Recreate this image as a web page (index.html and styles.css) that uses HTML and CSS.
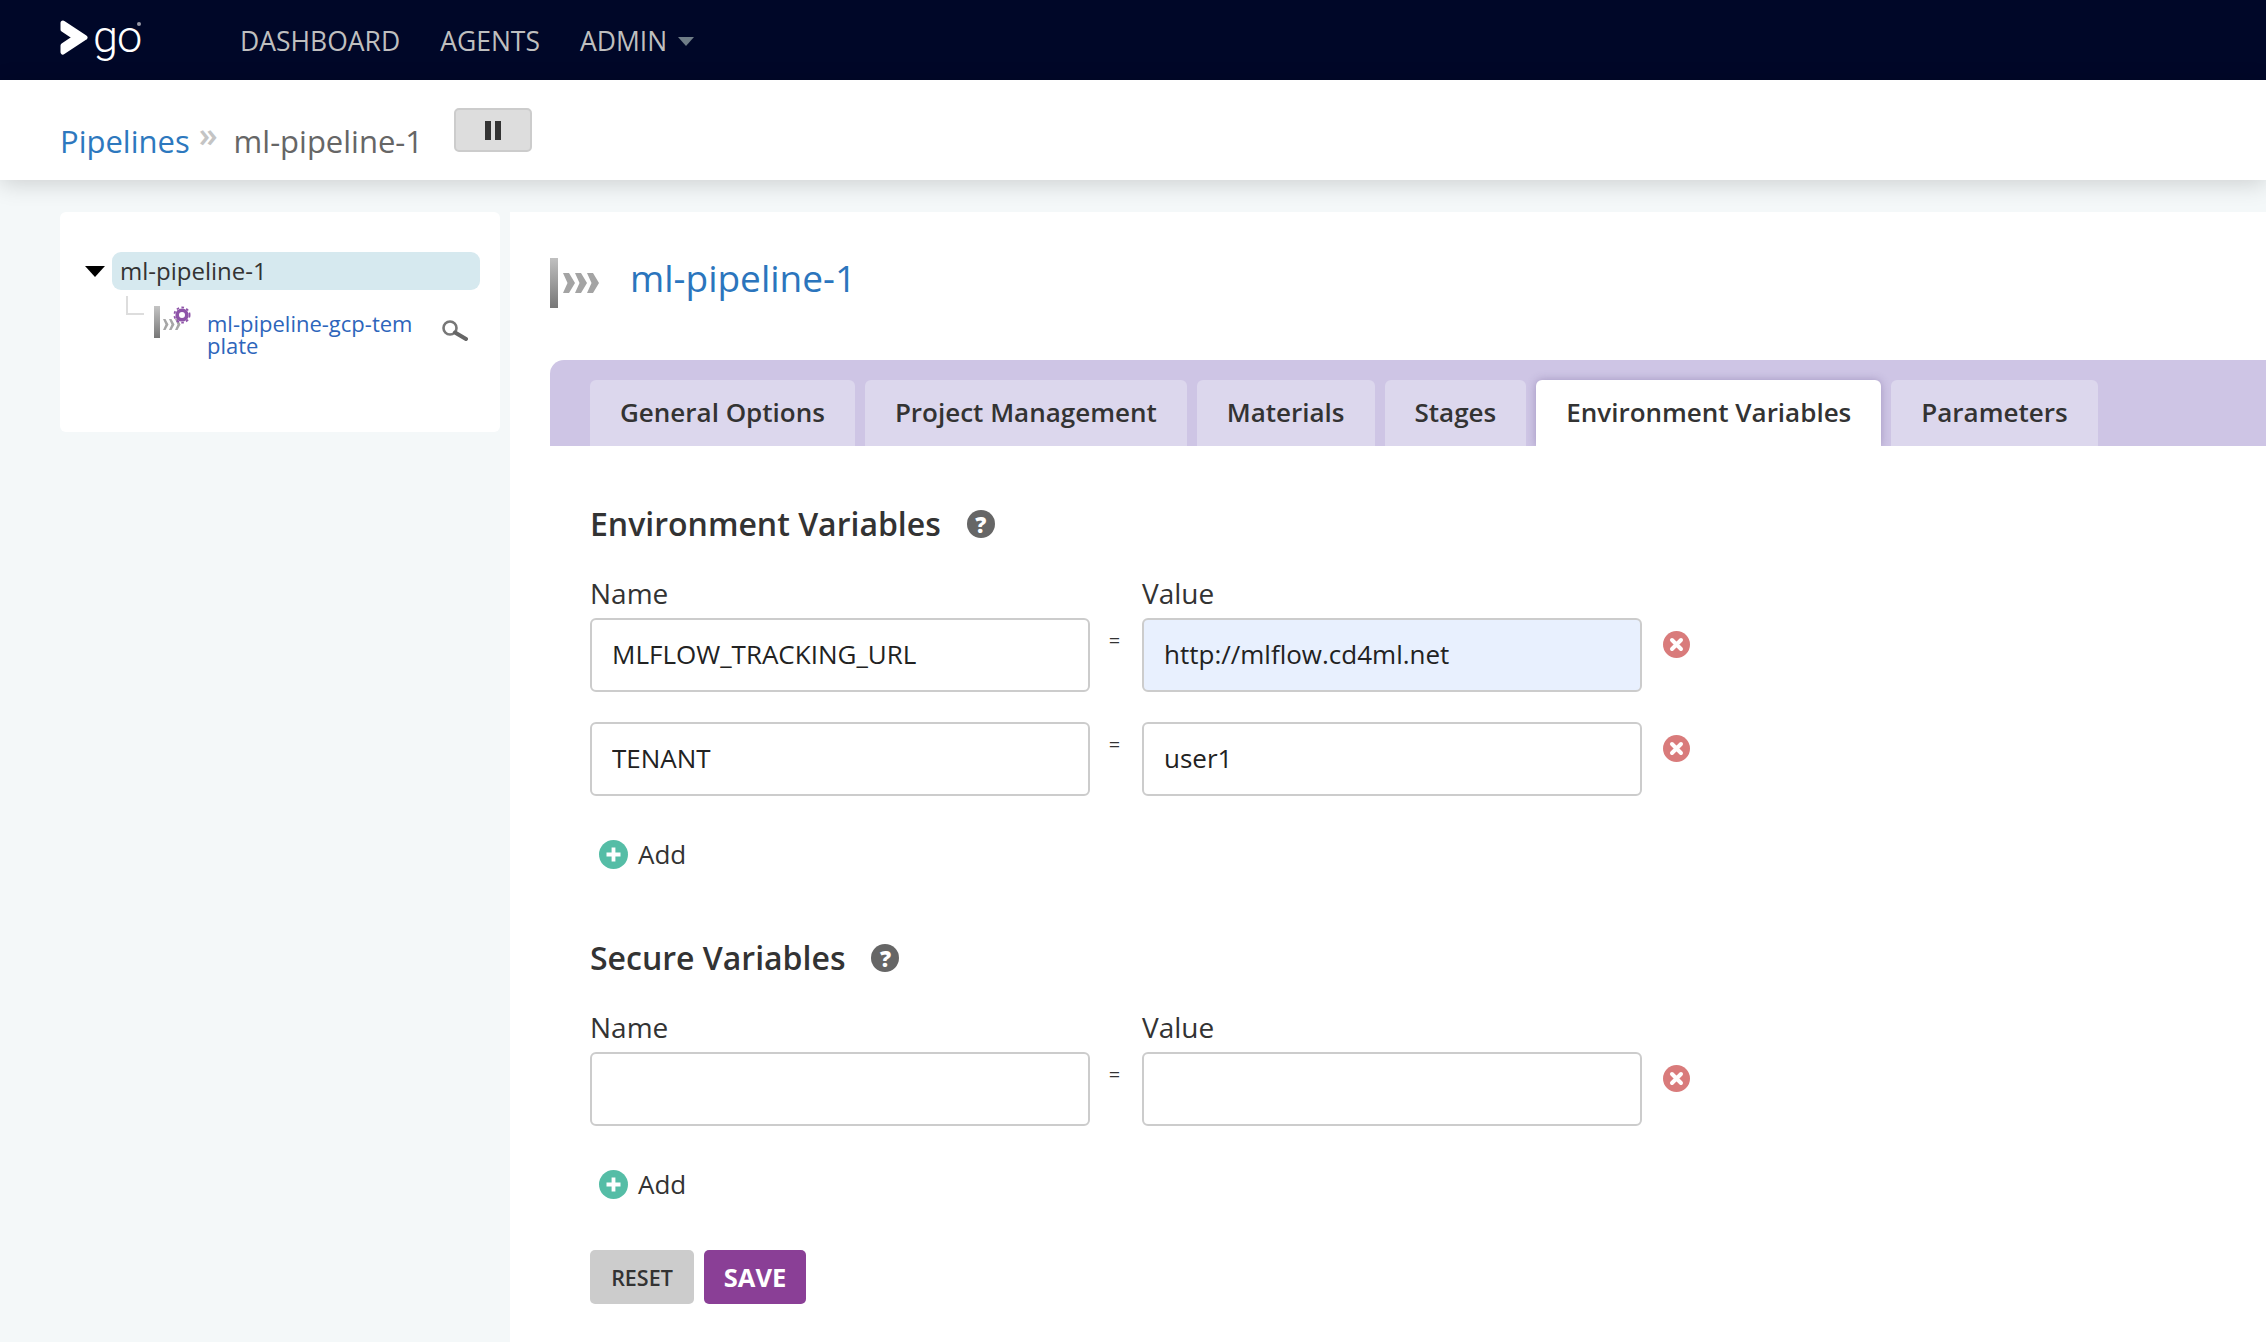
FILE: index.html
```html
<!DOCTYPE html>
<html lang="en">
<head>
<meta charset="utf-8">
<title>ml-pipeline-1</title>
<link rel="stylesheet" href="styles.css">
</head>
<body>
<header class="topbar">
  <a class="logo">
    <svg class="logo-mark" width="28" height="35" viewBox="0 0 28 35"><path d="M3 3 L25 17.500 L3 32 L3 25.500 L15 17.500 L3 9.500 Z" fill="#fff" stroke="#fff" stroke-width="5" stroke-linejoin="round"/></svg>
    <span class="logo-text">go</span>
    <i class="logo-dot"></i>
  </a>
  <nav class="nav">
    <a>DASHBOARD</a>
    <a>AGENTS</a>
    <a class="nav-admin">ADMIN<i class="caret"></i></a>
  </nav>
</header>

<div class="crumbbar">
  <div class="crumbs"><a class="crumb-link">Pipelines</a><span class="crumb-sep">»</span><span class="crumb-current">ml-pipeline-1</span></div>
  <button class="pause"><i></i><i></i></button>
</div>

<div class="page">
  <aside class="sidebar">
    <div class="tree-root">
      <i class="tree-toggle"></i>
      <div class="tree-node">ml-pipeline-1</div>
    </div>
    <div class="tree-child">
      <i class="tree-elbow"></i>
      <svg class="tree-icon" width="37" height="32" viewBox="0 0 37 32">
        <defs><linearGradient id="g1" x1="0" y1="0" x2="0" y2="1"><stop offset="0" stop-color="#c4c4c4"/><stop offset="1" stop-color="#777"/></linearGradient></defs>
        <rect x="0" y="0" width="6" height="32" fill="url(#g1)"/>
        <path d="M9 13h2.500l3 5.500-3 5.500h-2.500l2.500-5.500zM15 13h2.500l3 5.500-3 5.500h-2.500l2.500-5.500zM21 13h2.500l3 5.500-3 5.500h-2.500l2.500-5.500z" fill="#a6a6a6"/>
        <circle cx="28" cy="9" r="4.800" fill="#fff" stroke="#8e54a8" stroke-width="3.600"/>
        <circle cx="28" cy="9" r="7.600" fill="none" stroke="#8e54a8" stroke-width="1.800" stroke-dasharray="2.600 2.400"/>
      </svg>
      <a class="tree-link">ml-pipeline-gcp-template</a>
      <svg class="tree-search" width="27" height="21" viewBox="0 0 27 21"><circle cx="9" cy="8" r="6.500" fill="#fff" stroke="#777" stroke-width="2.600"/><path d="M14 12.500 L25 19" stroke="#666" stroke-width="4" stroke-linecap="round"/></svg>
    </div>
  </aside>

  <main class="main">
    <div class="title-row">
      <svg class="title-icon" width="50" height="50" viewBox="0 0 50 50">
        <defs><linearGradient id="g2" x1="0" y1="0" x2="0" y2="1"><stop offset="0" stop-color="#c0c0c0"/><stop offset="1" stop-color="#777"/></linearGradient></defs>
        <rect x="0" y="0" width="8" height="50" fill="url(#g2)"/>
        <path d="M13 15h6l6 10-6 10h-6l4.500-10zM25 15h6l6 10-6 10h-6l4.500-10zM37 15h6l6 10-6 10h-6l4.500-10z" fill="#a4a4a4"/>
      </svg>
      <h1 class="title">ml-pipeline-1</h1>
    </div>

    <div class="tabs">
      <a class="tab">General Options</a>
      <a class="tab">Project Management</a>
      <a class="tab">Materials</a>
      <a class="tab">Stages</a>
      <a class="tab tab-active">Environment Variables</a>
      <a class="tab">Parameters</a>
    </div>

    <form class="form">
      <h2 class="section-title">Environment Variables<span class="help">?</span></h2>
      <div class="labels"><label>Name</label><label class="label-value">Value</label></div>
      <div class="var-row">
        <input class="field" value="MLFLOW_TRACKING_URL"><span class="eq">=</span><input class="field field-filled" value="http://mlflow.cd4ml.net">
        <svg class="del" width="27" height="27" viewBox="0 0 27 27"><circle cx="13.500" cy="13.500" r="13.500" fill="#d97b7b"/><path d="M9 9l9 9M18 9l-9 9" stroke="#fff" stroke-width="4" stroke-linecap="round"/></svg>
      </div>
      <div class="var-row">
        <input class="field" value="TENANT"><span class="eq">=</span><input class="field" value="user1">
        <svg class="del" width="27" height="27" viewBox="0 0 27 27"><circle cx="13.500" cy="13.500" r="13.500" fill="#d97b7b"/><path d="M9 9l9 9M18 9l-9 9" stroke="#fff" stroke-width="4" stroke-linecap="round"/></svg>
      </div>
      <a class="add">
        <svg width="29" height="29" viewBox="0 0 29 29"><circle cx="14.500" cy="14.500" r="14.500" fill="#55bda6"/><path d="M14.500 7.500v14M7.500 14.500h14" stroke="#fff" stroke-width="3.800"/></svg>
        Add
      </a>

      <h2 class="section-title section-secure">Secure Variables<span class="help">?</span></h2>
      <div class="labels"><label>Name</label><label class="label-value">Value</label></div>
      <div class="var-row">
        <input class="field"><span class="eq">=</span><input class="field">
        <svg class="del" width="27" height="27" viewBox="0 0 27 27"><circle cx="13.500" cy="13.500" r="13.500" fill="#d97b7b"/><path d="M9 9l9 9M18 9l-9 9" stroke="#fff" stroke-width="4" stroke-linecap="round"/></svg>
      </div>
      <a class="add">
        <svg width="29" height="29" viewBox="0 0 29 29"><circle cx="14.500" cy="14.500" r="14.500" fill="#55bda6"/><path d="M14.500 7.500v14M7.500 14.500h14" stroke="#fff" stroke-width="3.800"/></svg>
        Add
      </a>

      <div class="actions">
        <button type="button" class="btn btn-reset">RESET</button>
        <button type="button" class="btn btn-save">SAVE</button>
      </div>
    </form>
  </main>
</div>
</body>
</html>
```
FILE: styles.css
```css
* { box-sizing: border-box; }
html, body { margin: 0; height: 100%; overflow: hidden; }
body {
  font-family: "Open Sans", "Noto Sans", sans-serif;
  background: #f4f8f9;
  color: #333;
  display: flex;
  flex-direction: column;
}

.topbar {
  height: 80px;
  flex: none;
  background: #000728;
  display: flex;
  align-items: center;
  padding-left: 60px;
}
.logo { width: 80px; height: 40px; display: flex; align-items: flex-start; color: #fff; position: relative; }
.logo-mark { flex: none; }
.logo-text {
  font-family: Roboto, sans-serif;
  font-size: 45px;
  font-weight: 300;
  line-height: 34px;
  letter-spacing: -1px;
  margin-left: 5px;
}
.logo-dot {
  position: absolute;
  left: 77px;
  top: 2px;
  width: 4px;
  height: 4px;
  border-radius: 50%;
  background: #9a9aa6;
}
.nav {
  margin-left: 100px;
  padding-top: 2px;
  display: flex;
  gap: 40px;
  font-size: 26.5px;
  line-height: 40px;
  color: #bfbfbf;
}
.nav-admin { display: flex; align-items: center; }
.caret {
  margin-left: 11px;
  width: 0;
  height: 0;
  border-left: 8px solid transparent;
  border-right: 8px solid transparent;
  border-top: 9px solid #6f7d87;
}

.crumbbar {
  height: 100px;
  flex: none;
  background: #fff;
  display: flex;
  align-items: flex-start;
  padding: 28px 0 0 60px;
  box-shadow: 0 4px 22px rgba(0, 0, 0, .16);
  position: relative;
}
.crumbs { margin-top: 13px; font-size: 31px; line-height: 40px; display: flex; white-space: nowrap; }
.crumb-link { color: #2d78be; }
.crumb-sep { color: #c4c4c4; font-size: 34px; font-weight: 600; margin: -7px 16px 0 9px; }
.crumb-current { color: #666; }
.pause {
  margin-left: 31px;
  width: 78px;
  height: 44px;
  background: #ddd;
  border: 2px solid #ccc;
  border-radius: 5px;
  display: flex;
  align-items: center;
  justify-content: center;
  gap: 4px;
  padding: 0;
}
.pause i { width: 6px; height: 19px; background: #333; }

.page {
  flex: 1;
  display: flex;
  align-items: stretch;
  padding: 32px 0 0 60px;
  gap: 10px;
  min-height: 0;
}
.sidebar {
  width: 440px;
  height: 220px;
  flex: none;
  background: #fff;
  border-radius: 6px;
  padding: 40px 20px 0 25px;
}
.tree-root { display: flex; align-items: center; }
.tree-toggle {
  flex: none;
  margin-right: 7px;
  width: 0;
  height: 0;
  border-left: 10px solid transparent;
  border-right: 10px solid transparent;
  border-top: 11px solid #000;
}
.tree-node {
  flex: 1;
  height: 38px;
  line-height: 37px;
  padding-left: 8px;
  font-size: 24px;
  color: #333;
  background: #d6e9ef;
  border-radius: 9px;
}
.tree-child { display: flex; align-items: flex-start; padding-left: 41px; }
.tree-elbow {
  flex: none;
  width: 18px;
  height: 19px;
  margin-top: 6px;
  border-left: 2px solid #ddd;
  border-bottom: 2px solid #ddd;
}
.tree-icon { flex: none; margin: 16px 0 0 10px; }
.tree-link {
  flex: none;
  width: 212px;
  margin: 22px 0 0 16px;
  font-size: 22px;
  line-height: 22px;
  color: #2d65bb;
  word-break: break-all;
}
.tree-search { flex: none; margin: 30px 0 0 22px; }

.main {
  flex: 1;
  min-width: 0;
  background: #fff;
  padding-left: 40px;
}
.title-row { height: 148px; display: flex; align-items: flex-start; }
.title-icon { flex: none; margin-top: 46px; }
.title {
  margin: 41px 0 0 30px;
  font-size: 37px;
  font-weight: 400;
  line-height: 50px;
  color: #2b75bd;
}

.tabs {
  height: 86px;
  background: #cec5e5;
  border-radius: 14px 0 0 0;
  padding: 20px 0 0 40px;
  display: flex;
  gap: 10px;
}
.tab {
  height: 66px;
  padding: 0 30px;
  font-size: 26px;
  font-weight: 600;
  line-height: 64px;
  color: #333;
  background: #dcd7ed;
  border-radius: 6px 6px 0 0;
}
.tab-active {
  background: #fff;
  box-shadow: 0 0 8px rgba(80, 60, 120, .35);
  clip-path: inset(-10px -10px 0 -10px);
}

.form { padding: 58px 0 0 40px; }
.section-title {
  margin: 0 0 31px;
  font-size: 32px;
  font-weight: 600;
  line-height: 40px;
  color: #333;
  display: flex;
  align-items: center;
}
.section-secure { margin-top: 66px; }
.help {
  margin-left: 26px;
  width: 28px;
  height: 28px;
  border-radius: 50%;
  background: #666;
  color: #fff;
  font-size: 22px;
  font-weight: 800;
  line-height: 28px;
  text-align: center;
}
.labels { display: flex; height: 36px; margin-bottom: 7px; font-size: 28px; line-height: 36px; color: #333; }
.labels label { width: 552px; }
.var-row { display: grid; grid-template-columns: 500px 52px 500px 27px; height: 74px; margin-bottom: 30px; }
.var-row:last-of-type { margin-bottom: 0; }
.field {
  width: 500px;
  height: 74px;
  border: 2px solid #ccc;
  border-radius: 6px;
  padding: 0 20px 2px;
  font: 400 26px "Open Sans", sans-serif;
  color: #222;
  background: #fff;
}
.field-filled { background: #e8f0fe; }
.eq { font-size: 20px; line-height: 46px; text-align: center; color: #333; margin-left: -3px; }
.del { margin: 13px 0 0 21px; }

.add {
  margin: 40px 0 0 9px;
  height: 36px;
  display: flex;
  align-items: center;
  gap: 10px;
  font-size: 26px;
  line-height: 36px;
  color: #333;
}
.actions { margin-top: 48px; display: flex; gap: 10px; }
.btn { height: 54px; border: 0; border-radius: 5px; padding: 0; font-family: "Open Sans", sans-serif; }
.btn-reset { width: 104px; background: #ccc; color: #333; font-size: 21.5px; font-weight: 600; }
.btn-save { width: 102px; background: #8a3f96; color: #fff; font-size: 25.5px; font-weight: 700; line-height: 50px; }
```
